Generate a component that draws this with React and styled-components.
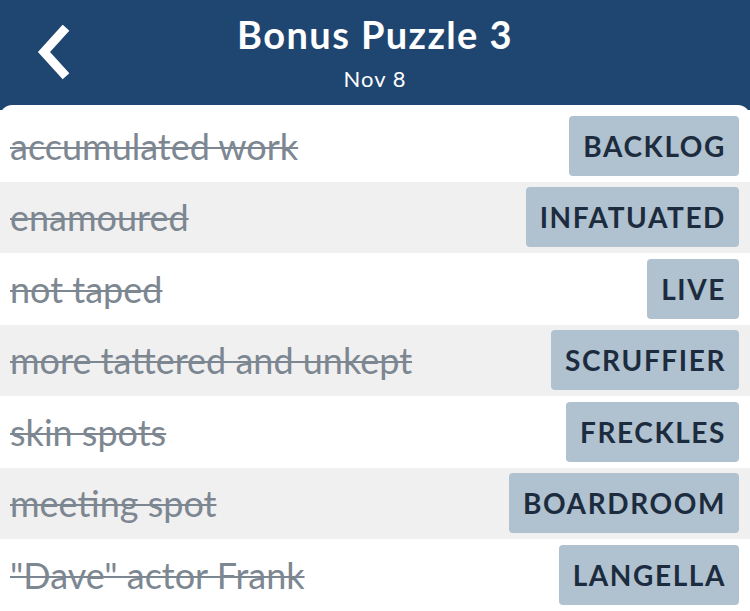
import React from 'react';
import styled, { createGlobalStyle } from 'styled-components';

const Global = createGlobalStyle`
  html, body {
    margin: 0;
    padding: 0;
    background: #1f4571;
    font-family: Lato, "Open Sans", sans-serif;
  }
`;

const Screen = styled.div`
  width: 750px;
  height: 611px;
  overflow: hidden;
  background: #1f4571;
  display: flex;
  flex-direction: column;
`;

const Header = styled.div`
  height: 105px;
  flex-shrink: 0;
  position: relative;
  display: flex;
  flex-direction: column;
  align-items: center;
  color: #fff;
`;

const Back = styled.button`
  position: absolute;
  left: 30px;
  top: 24px;
  width: 48px;
  height: 58px;
  border: 0;
  padding: 0;
  background: none;
  display: flex;
  align-items: center;
  justify-content: center;
`;

const Title = styled.div`
  font-size: 38px;
  font-weight: 700;
  letter-spacing: 1.4px;
  margin-top: 11px;
  line-height: 46px;
`;

const Sub = styled.div`
  font-size: 22px;
  letter-spacing: 1px;
  line-height: 26px;
  margin-top: 9px;
`;

const Panel = styled.div`
  flex: 1;
  background: #fff;
  border-radius: 12px 12px 0 0;
  padding-top: 5px;
`;

const Row = styled.div`
  height: 71.5px;
  display: flex;
  align-items: center;
  justify-content: space-between;
  padding: 0 11px 0 10px;
  background: ${(p) => (p.$shade ? '#f0f0f0' : '#fff')};
`;

const Clue = styled.span`
  font-size: 36px;
  color: #7d8792;
  text-decoration: line-through;
  text-decoration-thickness: 2px;
  white-space: nowrap;
`;

const Answer = styled.span`
  height: 60px;
  display: flex;
  align-items: center;
  padding: 0 13px 0 14px;
  background: #b0c1cf;
  border-radius: 4px;
  color: #1c2c3e;
  font-size: 28px;
  font-weight: 700;
  letter-spacing: 1.6px;
`;

const items = [
  ['accumulated work', 'BACKLOG'],
  ['enamoured', 'INFATUATED'],
  ['not taped', 'LIVE'],
  ['more tattered and unkept', 'SCRUFFIER'],
  ['skin spots', 'FRECKLES'],
  ['meeting spot', 'BOARDROOM'],
  ['"Dave" actor Frank', 'LANGELLA'],
];

export default function App() {
  return (
    <Screen>
      <Global />
      <Header>
        <Back aria-label="back">
          <svg width="40" height="56" viewBox="0 0 40 56">
            <path d="M29 6 L10 27 L29 48" fill="none" stroke="#fff" strokeWidth="9" strokeLinecap="square" />
          </svg>
        </Back>
        <Title>Bonus Puzzle 3</Title>
        <Sub>Nov 8</Sub>
      </Header>
      <Panel>
        {items.map(([clue, answer], i) => (
          <Row key={answer} $shade={i % 2 === 1}>
            <Clue>{clue}</Clue>
            <Answer>{answer}</Answer>
          </Row>
        ))}
      </Panel>
    </Screen>
  );
}
